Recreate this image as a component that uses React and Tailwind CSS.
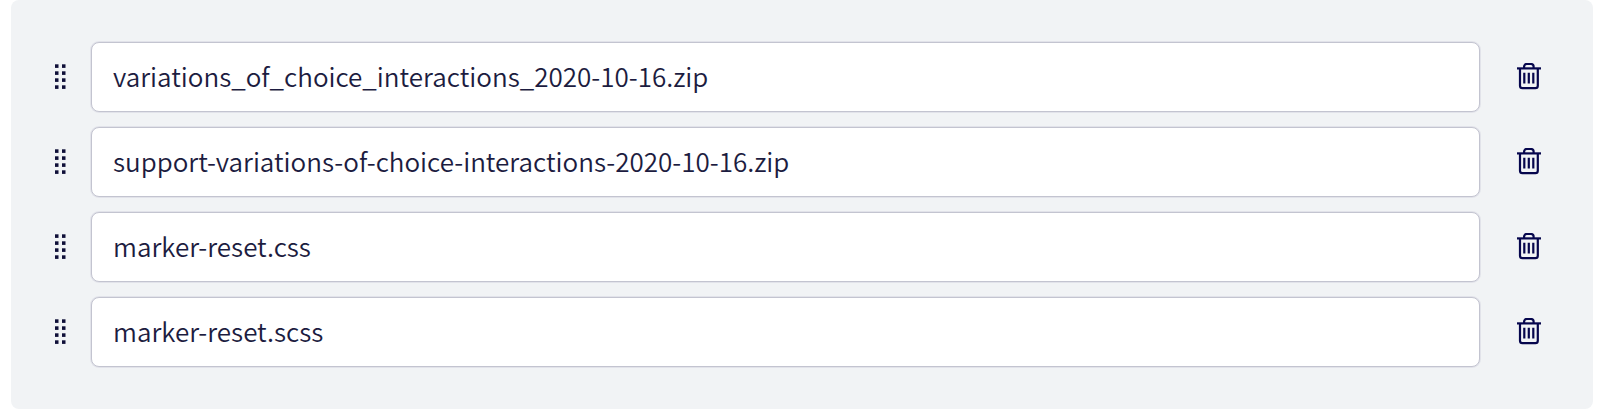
import { useState } from "react"

const initialFiles = [
  { id: 1, name: "variations_of_choice_interactions_2020-10-16.zip" },
  { id: 2, name: "support-variations-of-choice-interactions-2020-10-16.zip" },
  { id: 3, name: "marker-reset.css" },
  { id: 4, name: "marker-reset.scss" },
]

// Drag handle: two columns of four square dots
const GripIcon = () => (
  <svg width="12" height="26" viewBox="0 0 12 26" fill="#0f0f38" aria-hidden="true">
    {[0, 7, 14, 21].map((y) => (
      <g key={y}>
        <rect x="0" y={y + 0.3} width="3.5" height="3.6" />
        <rect x="7" y={y + 0.3} width="3.5" height="3.6" />
      </g>
    ))}
  </svg>
)

const TrashIcon = () => (
  <svg width="24" height="28" viewBox="0 0 24 28" fill="none" stroke="#06064d" strokeWidth="2.2" aria-hidden="true">
    <path d="M0 5.4h24" />
    <path d="M7.1 5V3.6A2.6 2.6 0 0 1 9.7 1h4.3a2.6 2.6 0 0 1 2.6 2.6V5" />
    <path d="M3 5.4v17.3a2.4 2.4 0 0 0 2.4 2.4h13a2.4 2.4 0 0 0 2.4-2.4V5.4" />
    <path d="M7.3 9.7v10.8M11.8 9.7v10.8M16.3 9.7v10.8" />
  </svg>
)

export default function App() {
  const [files, setFiles] = useState(initialFiles)

  // Rename a file in place
  const renameFile = (id, name) => {
    setFiles((prevFiles) => prevFiles.map((file) => (file.id === id ? { ...file, name } : file)))
  }

  // Remove a file from the list
  const removeFile = (id) => {
    setFiles((prevFiles) => prevFiles.filter((file) => file.id !== id))
  }

  return (
    <main className="bg-white">
      <ul className="ml-[11px] mr-[7px] flex flex-col gap-[15px] rounded-lg bg-[#f1f3f5] pt-[42px] pr-[30px] pb-[42px] pl-[35px]">
        {files.map((file) => (
          <li key={file.id} className="flex items-center gap-[15px]">
            <button
              type="button"
              aria-label={`Move ${file.name}`}
              className="flex h-10 w-[30px] cursor-grab items-center justify-center"
            >
              <GripIcon />
            </button>
            <input
              type="text"
              aria-label="File name"
              value={file.name}
              onChange={(e) => renameFile(file.id, e.target.value)}
              className="h-[70px] min-w-0 flex-1 rounded-lg border border-[#c3c4d0] bg-white px-[21px] pb-1 font-['Noto_Sans_CJK_SC',sans-serif] text-[26px] font-[350] text-[#1c1c40] ring-1 ring-[#e2e3ea]"
            />
            <button
              type="button"
              aria-label={`Delete ${file.name}`}
              onClick={() => removeFile(file.id)}
              className="flex h-10 w-[68px] cursor-pointer items-center justify-center"
            >
              <TrashIcon />
            </button>
          </li>
        ))}
      </ul>
    </main>
  )
}
